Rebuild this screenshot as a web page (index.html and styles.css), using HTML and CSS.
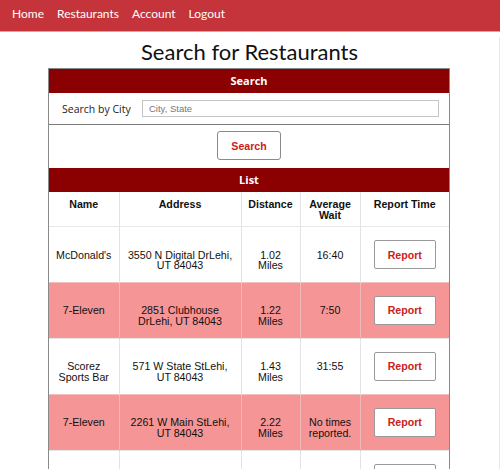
FILE: index.html
```html
<!DOCTYPE html>
<html lang="en">
<head>
<meta charset="utf-8">
<title>Search for Restaurants</title>
<link rel="stylesheet" href="styles.css">
</head>
<body>
<header class="topnav">
  <a href="#">Home</a>
  <a href="#">Restaurants</a>
  <a href="#">Account</a>
  <a href="#">Logout</a>
</header>
<main class="main">
  <h1 class="title">Search for Restaurants</h1>
  <section class="panel">
    <div class="bar">Search</div>
    <div class="search-row">
      <label class="search-label" for="city">Search by City</label>
      <input class="search-input" id="city" type="text" placeholder="City, State">
    </div>
    <div class="button-row">
      <button class="btn">Search</button>
    </div>
    <div class="bar">List</div>
    <table class="list">
      <colgroup>
        <col class="c-name"><col class="c-addr"><col class="c-dist"><col class="c-wait"><col class="c-rep">
      </colgroup>
      <thead>
        <tr><th>Name</th><th>Address</th><th>Distance</th><th>Average<br>Wait</th><th>Report Time</th></tr>
      </thead>
      <tbody>
        <tr><td>McDonald's</td><td>3550 N Digital DrLehi,<br>UT 84043</td><td>1.02<br>Miles</td><td>16:40</td><td><button class="btn">Report</button></td></tr>
        <tr class="alt"><td>7-Eleven</td><td>2851 Clubhouse<br>DrLehi, UT 84043</td><td>1.22<br>Miles</td><td>7:50</td><td><button class="btn">Report</button></td></tr>
        <tr><td>Scorez<br>Sports Bar</td><td>571 W State StLehi,<br>UT 84043</td><td>1.43<br>Miles</td><td>31:55</td><td><button class="btn">Report</button></td></tr>
        <tr class="alt"><td>7-Eleven</td><td>2261 W Main StLehi,<br>UT 84043</td><td>2.22<br>Miles</td><td>No times<br>reported.</td><td><button class="btn">Report</button></td></tr>
        <tr><td>Subway</td><td>1750 W Main StLehi,<br>UT 84043</td><td>2.45<br>Miles</td><td>5:10</td><td><button class="btn">Report</button></td></tr>
      </tbody>
    </table>
  </section>
</main>
</body>
</html>
```
FILE: styles.css
```css
html, body {
  margin: 0;
  padding: 0;
  background: #fff;
}
body {
  font-family: Lato, "Open Sans", sans-serif;
  color: #111;
  overflow: hidden;
}
.topnav {
  height: 32px;
  box-sizing: border-box;
  padding-bottom: 5px;
  background: #c4343a;
  border-bottom: 1px solid #eb9a9c;
  display: flex;
  align-items: center;
  gap: 13px;
  padding-left: 12px;
}
.topnav a {
  color: #fff;
  text-decoration: none;
  font-size: 12px;
}
.main {
  border-right: 1px solid #e8e8e8;
  width: 499px;
  min-height: 440px;
}
.title {
  margin: 5px 0 1px;
  font-size: 22px;
  line-height: 30px;
  font-weight: normal;
  text-align: center;
  color: #111;
}
.panel {
  margin-left: 48px;
  width: 400px;
  border: 1px solid #8a8a8a;
}
.bar {
  background: #8b0000;
  color: #fff;
  font-family: "Open Sans", sans-serif;
  font-weight: bold;
  font-size: 11px;
  height: 24px;
  line-height: 24px;
  text-align: center;
}
.search-row {
  display: flex;
  align-items: center;
  height: 31px;
  padding-left: 13px;
  border-bottom: 1px solid #7a7a7a;
}
.search-label {
  font-family: "Open Sans", sans-serif;
  font-size: 10.5px;
  width: 80px;
  color: #222;
}
.search-input {
  width: 283px;
  height: 15px;
  margin: 0;
  padding: 0 6px;
  border: 1px solid #c4c4c4;
  font-family: "Liberation Sans", Arial, sans-serif;
  font-size: 9.5px;
  color: #333;
}
.search-input::placeholder {
  color: #777;
}
.button-row {
  height: 43px;
  display: flex;
  justify-content: center;
  align-items: flex-start;
  padding-top: 6px;
  box-sizing: border-box;
}
.btn {
  height: 29px;
  width: 64px;
  background: #fff;
  border: 1px solid #8a8a8a;
  border-radius: 3px;
  color: #cc2020;
  font-family: "Liberation Sans", Arial, sans-serif;
  font-weight: bold;
  font-size: 10.6px;
  padding: 0;
  margin: 0;
}
.list td .btn {
  width: 62px;
  border-color: #999;
  border-radius: 2px;
}
.list {
  width: 400px;
  border-collapse: collapse;
  table-layout: fixed;
  font-family: "Liberation Sans", Arial, sans-serif;
  font-size: 10.67px;
  line-height: 10.7px;
  color: #111;
}
.c-name { width: 70px; }
.c-addr { width: 122px; }
.c-dist { width: 59px; }
.c-wait { width: 60px; }
.c-rep { width: 89px; }
.list th {
  font-weight: bold;
  vertical-align: top;
  text-align: center;
  padding: 7px 2px 0;
  height: 27px;
  border-left: 1px solid #e3e3e3;
}
.list td {
  text-align: center;
  vertical-align: baseline;
  padding: 13px 2px 11px;
  border-left: 1px solid #e3e3e3;
  border-top: 1px solid #e8e8e8;
}
.list th:first-child, .list td:first-child {
  border-left: none;
}
.list tr.alt td {
  background: #f69595;
  border-left-color: #f2b7b7;
  border-top-color: #f0c0c0;
}
```
